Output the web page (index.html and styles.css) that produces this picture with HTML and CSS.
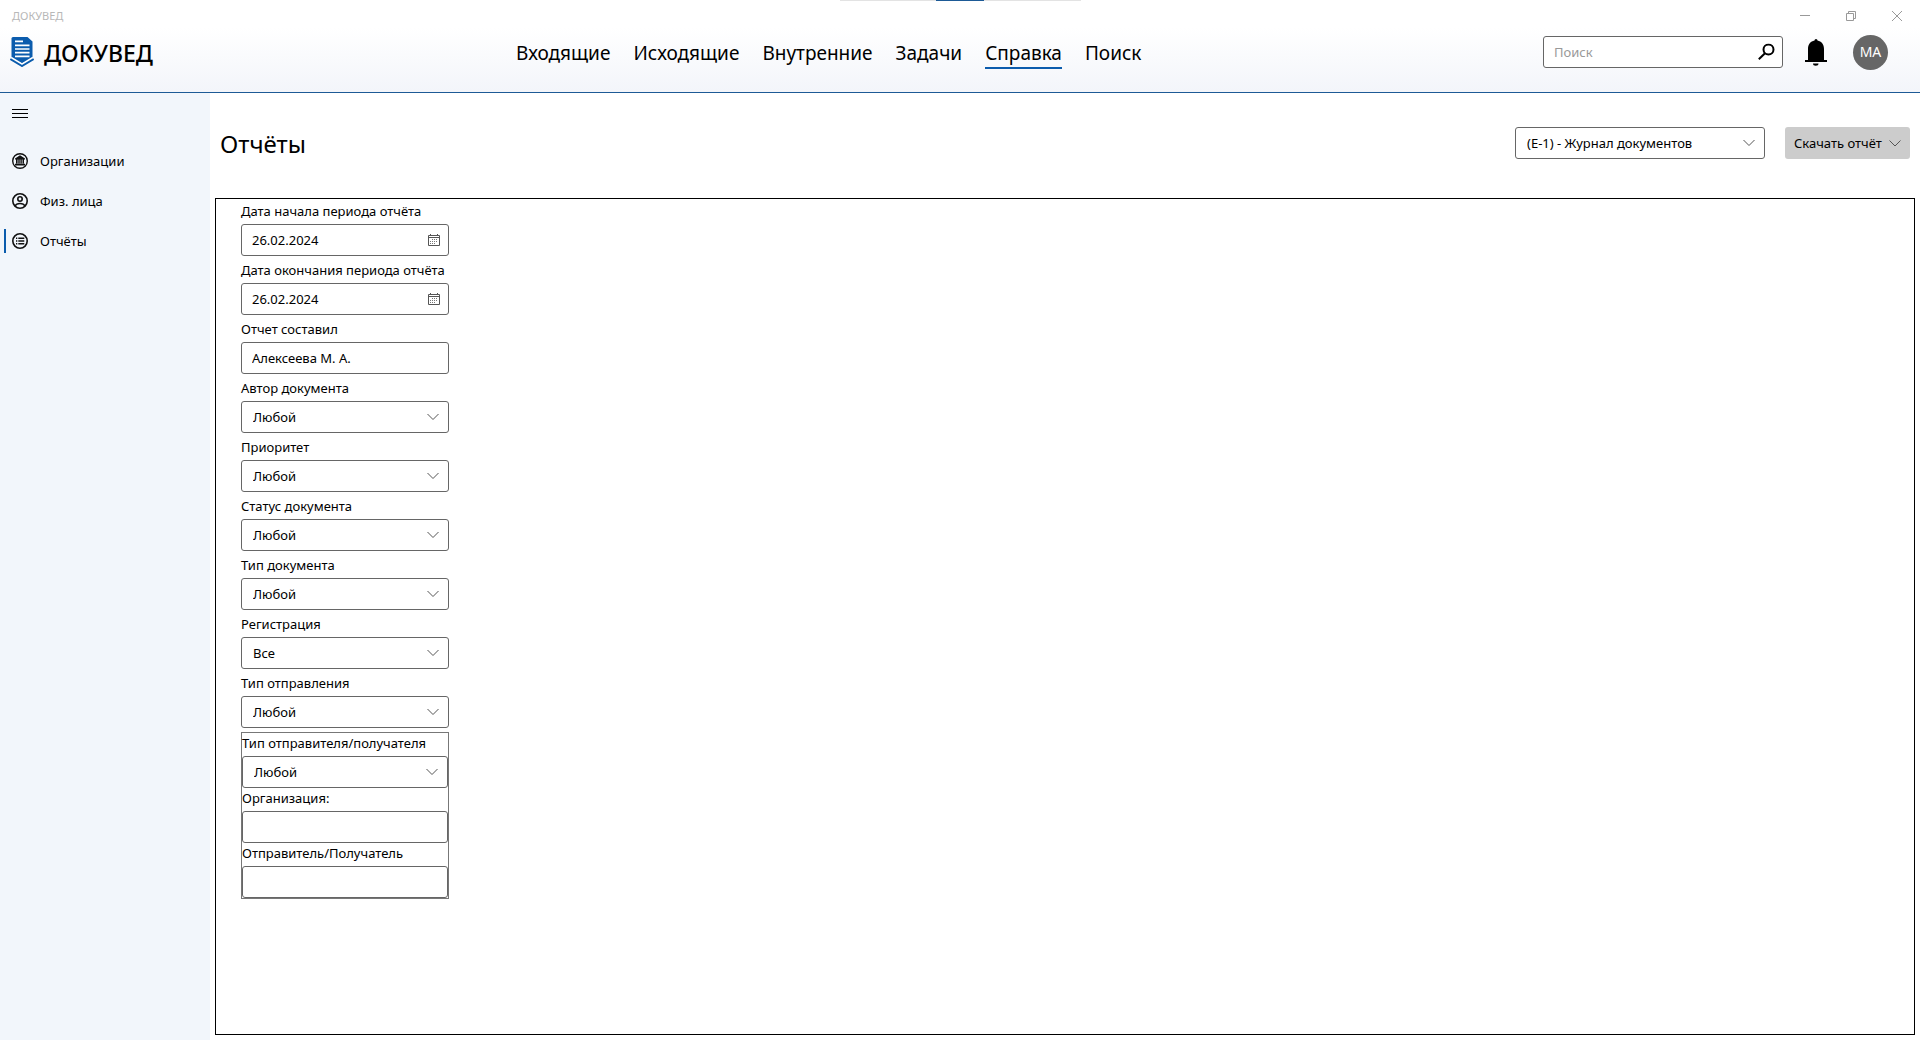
FILE: index.html
```html
<!DOCTYPE html>
<html lang="ru">
<head>
<meta charset="utf-8">
<meta name="viewport" content="width=device-width, initial-scale=1">
<title>ДОКУВЕД</title>
<link rel="stylesheet" href="styles.css">
</head>
<body>
<svg class="defs" aria-hidden="true">
  <symbol id="chevron" viewBox="0 0 12 7"><path d="M.5.5 6 6 11.5.5" fill="none" stroke="currentColor"/></symbol>
  <symbol id="calendar" viewBox="0 0 12 12">
    <path d="M.5 1.500h11v10H.5zM.5 3.500h11M2.500 0v2M9.500 0v2" fill="none" stroke="#555"/>
    <path d="M4 5.500h6M2 7.500h8M2 9.500h6" fill="none" stroke="#777" stroke-dasharray="1 1"/>
  </symbol>
</svg>
<header class="header">
  <div class="drag-handle"></div>
  <div class="titlebar">
    <span class="window-title">ДОКУВЕД</span>
    <div class="window-controls">
      <button type="button" aria-label="Свернуть"><svg width="10" height="10"><path d="M0 4.500h10"/></svg></button>
      <button type="button" aria-label="Восстановить"><svg width="10" height="10"><path d="M.5 2.500h7v7h-7zM2.500 2.500v-2h7v7h-2"/></svg></button>
      <button type="button" aria-label="Закрыть"><svg width="10" height="10"><path d="M0 0 10 10M10 0 0 10"/></svg></button>
    </div>
  </div>
  <div class="toolbar">
    <a class="brand" href="#">
      <svg width="24" height="30" viewBox="0 0 24 30" aria-hidden="true">
        <path d="M3 0h14.500l5 4.500V21L12 26.500 1.500 21V1.500Q1.500 0 3 0z" fill="#0b5cad"/>
        <path d="M.5 21.500 12 28.500l11.500-7" fill="none" stroke="#fff" stroke-width="4"/>
        <path d="M.3 22 12 29l11.700-7" fill="none" stroke="#0b5cad" stroke-width="2"/>
        <path d="M5 4.300h8M5 8.300h14.500M5 12h14.500M5 15.700h14.500M5 19.300h14.500" stroke="#fff" stroke-width="1.700"/>
      </svg>
      <span>ДОКУВЕД</span>
    </a>
    <nav class="main-nav">
      <a href="#">Входящие</a>
      <a href="#">Исходящие</a>
      <a href="#">Внутренние</a>
      <a href="#">Задачи</a>
      <a href="#" class="active" aria-current="page">Справка</a>
      <a href="#">Поиск</a>
    </nav>
    <div class="tools">
      <div class="control search">
        <input type="text" placeholder="Поиск" aria-label="Поиск">
        <svg width="17" height="17" viewBox="0 0 17 17" aria-hidden="true"><circle cx="10.500" cy="6" r="5" fill="none" stroke="#000" stroke-width="2"/><path d="M7 9.700.8 15.800" stroke="#000" stroke-width="2"/></svg>
      </div>
      <button type="button" class="bell" aria-label="Уведомления">
        <svg width="22" height="27" viewBox="0 0 22 27"><path d="M9.500 1.500a1.500 1.500 0 0 1 3 0c4 .7 6.500 4 6.500 8.500v11h3v2H0v-2h3V10c0-4.500 2.500-7.800 6.500-8.500zM8 24.500h5.500a2.750 2.200 0 0 1-5.500 0z"/></svg>
      </button>
      <button type="button" class="avatar">МА</button>
    </div>
  </div>
</header>
<div class="layout">
  <aside class="sidebar">
    <button type="button" class="menu-button" aria-label="Меню"><svg width="16" height="10"><path d="M0 .5h16M0 4.500h16M0 8.500h16" stroke="#000"/></svg></button>
    <nav class="side-nav">
      <a href="#">
        <svg width="16" height="16" viewBox="0 0 16 16" aria-hidden="true"><circle cx="8" cy="8" r="7.300" fill="none" stroke="#111" stroke-width="1.400"/><path d="M8 2.300 13 5.500v1H3v-1zM4 6.500h1.600v4H4zM6.300 6.500h1.400v4H6.300zM8.400 6.500h1.400v4H8.400zM10.500 6.500H12v4h-1.500zM3 10.800h10v1.700H3z" fill="#111"/></svg>
        Организации
      </a>
      <a href="#">
        <svg width="16" height="16" viewBox="0 0 16 16" fill="none" stroke="#111" stroke-width="1.600" aria-hidden="true"><circle cx="8" cy="8" r="7.200"/><circle cx="8" cy="6" r="2.200"/><path d="M3 13c1-2 3-2.500 5-2.500s4 .5 5 2.500"/></svg>
        Физ. лица
      </a>
      <a href="#" class="active" aria-current="page">
        <svg width="16" height="16" viewBox="0 0 16 16" fill="none" stroke="#111" stroke-width="1.600" aria-hidden="true"><circle cx="8" cy="8" r="7.200"/><path d="M4 5.200h1.300M6.300 5.200h6M4 8h1.300M6.300 8h6M4 10.800h1.300M6.300 10.800h6"/></svg>
        Отчёты
      </a>
    </nav>
  </aside>
  <main class="main">
    <div class="page-head">
      <h1>Отчёты</h1>
      <div class="control report-select">
        <select aria-label="Отчёт"><option>(E-1) - Журнал документов</option></select>
        <svg class="chevron"><use href="#chevron"/></svg>
      </div>
      <button type="button" class="download">Скачать отчёт <svg class="chevron"><use href="#chevron"/></svg></button>
    </div>
    <form class="panel">
      <div class="field">
        <label for="from">Дата начала периода отчёта</label>
        <div class="control"><input id="from" type="text" value="26.02.2024"><svg class="calendar"><use href="#calendar"/></svg></div>
      </div>
      <div class="field">
        <label for="to">Дата окончания периода отчёта</label>
        <div class="control"><input id="to" type="text" value="26.02.2024"><svg class="calendar"><use href="#calendar"/></svg></div>
      </div>
      <div class="field">
        <label for="compiler">Отчет составил</label>
        <div class="control"><input id="compiler" type="text" value="Алексеева М. А."></div>
      </div>
      <div class="field">
        <label for="author">Автор документа</label>
        <div class="control"><select id="author"><option>Любой</option></select><svg class="chevron"><use href="#chevron"/></svg></div>
      </div>
      <div class="field">
        <label for="priority">Приоритет</label>
        <div class="control"><select id="priority"><option>Любой</option></select><svg class="chevron"><use href="#chevron"/></svg></div>
      </div>
      <div class="field">
        <label for="status">Статус документа</label>
        <div class="control"><select id="status"><option>Любой</option></select><svg class="chevron"><use href="#chevron"/></svg></div>
      </div>
      <div class="field">
        <label for="doctype">Тип документа</label>
        <div class="control"><select id="doctype"><option>Любой</option></select><svg class="chevron"><use href="#chevron"/></svg></div>
      </div>
      <div class="field">
        <label for="registration">Регистрация</label>
        <div class="control"><select id="registration"><option>Все</option></select><svg class="chevron"><use href="#chevron"/></svg></div>
      </div>
      <div class="field">
        <label for="sending">Тип отправления</label>
        <div class="control"><select id="sending"><option>Любой</option></select><svg class="chevron"><use href="#chevron"/></svg></div>
      </div>
      <div class="group">
        <div class="field">
          <label for="party-type">Тип отправителя/получателя</label>
          <div class="control"><select id="party-type"><option>Любой</option></select><svg class="chevron"><use href="#chevron"/></svg></div>
        </div>
        <div class="field">
          <label for="org">Организация:</label>
          <div class="control"><input id="org" type="text"></div>
        </div>
        <div class="field">
          <label for="party">Отправитель/Получатель</label>
          <div class="control"><input id="party" type="text"></div>
        </div>
      </div>
    </form>
  </main>
</div>
</body>
</html>
```
FILE: styles.css
```css
* {
  box-sizing: border-box;
}

body {
  margin: 0;
  min-height: 100vh;
  display: flex;
  flex-direction: column;
  background: #fff;
  color: #000;
  font: 13px/20px "Noto Sans", "Open Sans", sans-serif;
}

button,
input,
select {
  font: inherit;
  color: inherit;
}

button {
  padding: 0;
  border: 0;
  background: none;
}

a {
  color: inherit;
  text-decoration: none;
}

svg {
  display: block;
  flex: none;
}

.defs {
  position: absolute;
  width: 0;
  height: 0;
}

/* Header */
.header {
  position: relative;
  height: 93px;
  border-bottom: 1px solid #1d5a96;
  background: linear-gradient(#fff 30%, #f3f5fa);
}

.drag-handle {
  position: absolute;
  top: 0;
  left: 50%;
  width: 241px;
  height: 1px;
  margin-left: -120px;
  background: linear-gradient(90deg, #e3e3e3 96px, #1d5a96 96px 144px, #e3e3e3 144px);
}

.titlebar {
  display: flex;
  justify-content: space-between;
  align-items: center;
  height: 32px;
  padding-left: 12px;
  font-size: 11px;
  color: #b8b8b8;
}

.window-controls {
  display: flex;
}

.window-controls button {
  display: grid;
  place-items: center;
  width: 46px;
  height: 32px;
}

.window-controls path {
  fill: none;
  stroke: #999;
}

.toolbar {
  display: grid;
  grid-template-columns: 516px auto 1fr;
  align-items: center;
  height: 40px;
}

.brand {
  display: flex;
  align-items: center;
  gap: 10px;
  padding-left: 10px;
  font-size: 23px;
  line-height: 32px;
  font-weight: 500;
}

.brand span {
  padding-top: 2px;
}

.main-nav {
  display: flex;
  gap: 23px;
  font-size: 19px;
  line-height: 28px;
}

.main-nav a {
  border-bottom: 2px solid transparent;
  margin-top: 3px;
}

.main-nav .active {
  border-color: #0b5cad;
}

.tools {
  display: flex;
  justify-content: flex-end;
  align-items: center;
  padding-right: 32px;
}

.bell {
  margin: 0 26px 0 22px;
}

.avatar {
  width: 35px;
  height: 35px;
  border-radius: 50%;
  background: #666;
  color: #fff;
  font-size: 14px;
}

/* Controls */
.control {
  position: relative;
}

.control input,
.control select {
  display: block;
  width: 100%;
  height: 32px;
  margin: 0;
  padding: 0 30px 0 10px;
  border: 1px solid #666;
  border-radius: 3px;
  background: #fff;
  appearance: none;
  outline: 0;
}

.control select {
  padding-left: 11px;
}

.control > svg {
  position: absolute;
  right: 10px;
  top: 50%;
  transform: translateY(-50%);
  pointer-events: none;
}

.chevron {
  width: 12px;
  height: 7px;
  color: #555;
}

.control .calendar {
  right: 9px;
  width: 12px;
  height: 12px;
}

.control.search > svg {
  right: 8px;
}

.search {
  width: 240px;
}

.search input::placeholder {
  color: #999;
  opacity: 1;
}

/* Body */
.layout {
  flex: 1;
  display: flex;
}

.sidebar {
  width: 210px;
  background: #f2f6fb;
}

.menu-button {
  display: block;
  padding: 16px 12px;
}

.side-nav {
  display: flex;
  flex-direction: column;
  padding-top: 6px;
}

.side-nav a {
  display: flex;
  align-items: center;
  gap: 12px;
  height: 40px;
  padding-left: 12px;
}

.side-nav .active {
  padding-left: 6px;
}

.side-nav .active::before {
  content: "";
  width: 2px;
  height: 24px;
  margin: 0 -8px 0 -2px;
  background: #0b5cad;
}

.side-nav .active svg {
  margin-left: 2px;
}

.main {
  flex: 1;
  min-width: 0;
  display: flex;
  flex-direction: column;
  padding: 0 5px 5px;
}

.page-head {
  display: flex;
  align-items: center;
  height: 105px;
  padding: 0 5px 5px;
}

.page-head h1 {
  flex: 1;
  margin: 0;
  padding-top: 2px;
  font-size: 24px;
  line-height: 32px;
  font-weight: 400;
}

.report-select {
  width: 250px;
}

.download {
  display: flex;
  align-items: center;
  justify-content: space-between;
  width: 125px;
  height: 32px;
  margin-left: 20px;
  padding: 0 9px;
  border-radius: 3px;
  background: #ccc;
  white-space: nowrap;
}

.panel {
  flex: 1;
  display: flex;
  flex-direction: column;
  align-items: flex-start;
  gap: 4px;
  padding: 2px 25px;
  border: 1px solid #000;
}

.field {
  width: 208px;
}

.field label {
  display: block;
  height: 23px;
  white-space: nowrap;
}

.group {
  width: 208px;
  border: 1px solid #777;
}

.group .field {
  width: 100%;
}
```
